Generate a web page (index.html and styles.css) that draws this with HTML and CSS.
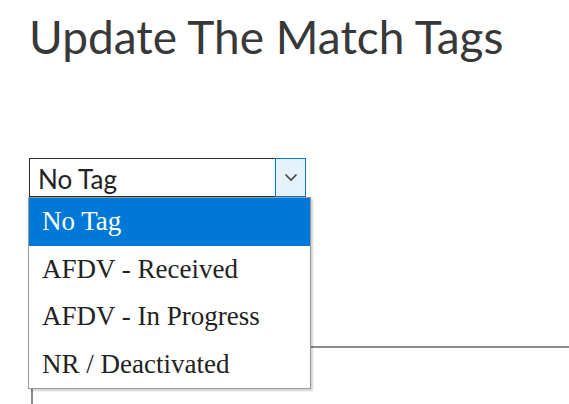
FILE: index.html
```html
<!DOCTYPE html>
<html>
<head>
<meta charset="utf-8">
<link rel="stylesheet" href="styles.css">
</head>
<body>
<div class="page">
  <h1 class="title">Update The Match Tags</h1>
  <div class="field">
    <div class="select">
      <span class="select-value">No Tag</span>
      <span class="select-btn">
        <svg width="14" height="9" viewBox="0 0 14 9"><path d="M1.5 1.5 L7 7 L12.5 1.5" fill="none" stroke="#444" stroke-width="1.6"/></svg>
      </span>
    </div>
    <ul class="dropdown">
      <li class="opt opt-active">No Tag</li>
      <li class="opt">AFDV - Received</li>
      <li class="opt">AFDV - In Progress</li>
      <li class="opt">NR / Deactivated</li>
    </ul>
  </div>
  <div class="panel"></div>
</div>
</body>
</html>
```
FILE: styles.css
```css
html, body {
  margin: 0;
  padding: 0;
  background: #ffffff;
}
.page {
  height: 404px;
  overflow: hidden;
  box-sizing: border-box;
  padding: 9px 0 0 29px;
  font-family: Lato, "Liberation Sans", sans-serif;
}
.title {
  margin: 0;
  font-family: Lato, sans-serif;
  font-weight: 400;
  font-size: 46px;
  line-height: 56px;
  color: #383838;
  white-space: nowrap;
}
.field {
  position: relative;
  margin-top: 93px;
  width: 277px;
  z-index: 2;
}
.select {
  display: flex;
  height: 39px;
  box-sizing: border-box;
  border: 1px solid #2b2b2b;
  border-right: none;
  background: #fff;
}
.select-value {
  flex: 1;
  padding-left: 8px;
  font-size: 26px;
  line-height: 41px;
  color: #222;
}
.select-btn {
  width: 31px;
  box-sizing: border-box;
  border: 1px solid #0078d7;
  margin-top: -1px;
  height: 39px;
  background: #e5f1fb;
  display: flex;
  align-items: center;
  justify-content: center;
}
.dropdown {
  position: absolute;
  left: -1px;
  top: 39px;
  width: 281px;
  margin: 0;
  padding: 0;
  list-style: none;
  background: #fff;
  border: 1px solid #9a9a9a;
  box-shadow: 2px 2px 2px rgba(0,0,0,0.18);
}
.opt {
  height: 47.5px;
  line-height: 47px;
  padding-left: 13px;
  font-family: "Liberation Serif", serif;
  font-size: 27px;
  color: #222;
}
.opt-active {
  background: #0078d7;
  color: #fff;
}
.panel {
  margin-top: 149px;
  margin-left: 2px;
  height: 120px;
  border-top: 2px solid #8c8c8c;
  border-left: 2px solid #8c8c8c;
  position: relative;
  z-index: 1;
}
```
